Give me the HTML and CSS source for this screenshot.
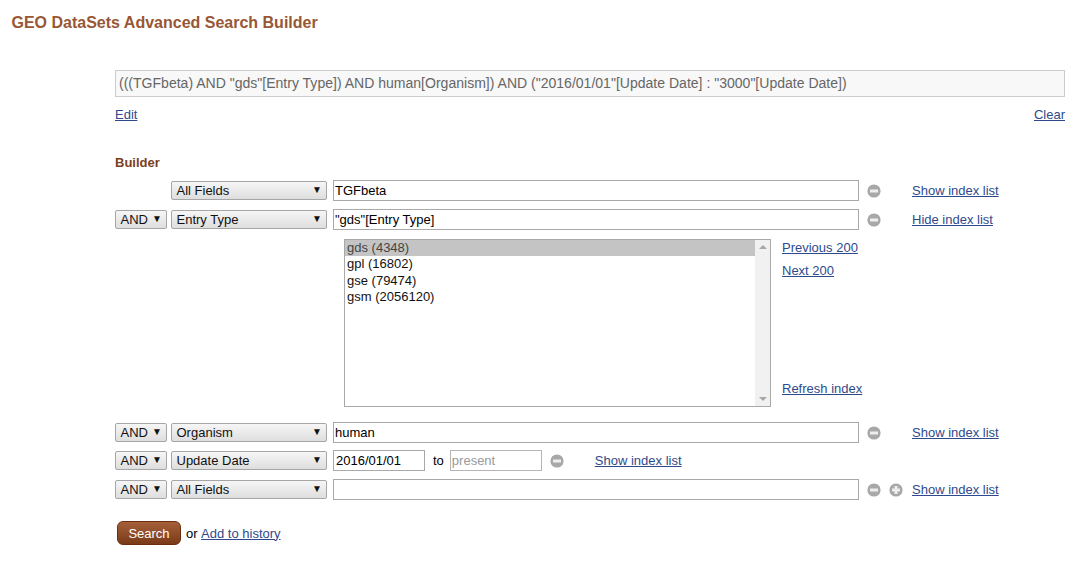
FILE: index.html
```html
<!DOCTYPE html>
<html lang="en">
<head>
<meta charset="utf-8">
<title>GEO DataSets Advanced Search Builder</title>
<link rel="stylesheet" href="styles.css">
</head>
<body>
<svg class="defs" width="0" height="0" aria-hidden="true">
  <symbol id="minus" viewBox="0 0 14 14"><circle cx="7" cy="7" r="6.6" fill="#a8a8a8"/><rect x="3" y="5.5" width="8" height="3" fill="#eee"/></symbol>
  <symbol id="plus" viewBox="0 0 14 14"><circle cx="7" cy="7" r="6.6" fill="#a8a8a8"/><rect x="3" y="5.5" width="8" height="3" fill="#eee"/><rect x="5.5" y="3" width="3" height="8" fill="#eee"/></symbol>
</svg>
<h1 class="title">GEO DataSets Advanced Search Builder</h1>
<main class="content">
  <div class="query">(((TGFbeta) AND "gds"[Entry Type]) AND human[Organism]) AND ("2016/01/01"[Update Date] : "3000"[Update Date])</div>
  <div class="query-links"><a href="#">Edit</a><a href="#">Clear</a></div>
  <h2 class="builder-title">Builder</h2>

  <div class="row">
    <span class="op-empty"></span>
    <div class="select field"><span>All Fields</span><i class="arrow">▼</i></div>
    <div class="input term">TGFbeta</div>
    <svg class="icon"><use href="#minus"/></svg>
    <a class="index-link" href="#">Show index list</a>
  </div>
  <div class="row">
    <div class="select op"><span>AND</span><i class="arrow">▼</i></div>
    <div class="select field"><span>Entry Type</span><i class="arrow">▼</i></div>
    <div class="input term">"gds"[Entry Type]</div>
    <svg class="icon"><use href="#minus"/></svg>
    <a class="index-link" href="#">Hide index list</a>
  </div>
  <div class="index-panel">
    <div class="listbox">
      <div class="options">
        <div class="option selected">gds (4348)</div>
        <div class="option">gpl (16802)</div>
        <div class="option">gse (79474)</div>
        <div class="option">gsm (2056120)</div>
      </div>
      <div class="scrollbar"><span class="sb-up"></span><span class="sb-down"></span></div>
    </div>
    <div class="panel-links">
      <a href="#">Previous 200</a>
      <a href="#">Next 200</a>
      <a class="refresh" href="#">Refresh index</a>
    </div>
  </div>
  <div class="row">
    <div class="select op"><span>AND</span><i class="arrow">▼</i></div>
    <div class="select field"><span>Organism</span><i class="arrow">▼</i></div>
    <div class="input term">human</div>
    <svg class="icon"><use href="#minus"/></svg>
    <a class="index-link" href="#">Show index list</a>
  </div>
  <div class="row row-date">
    <div class="select op"><span>AND</span><i class="arrow">▼</i></div>
    <div class="select field"><span>Update Date</span><i class="arrow">▼</i></div>
    <div class="input date">2016/01/01</div>
    <span class="to">to</span>
    <div class="input date placeholder">present</div>
    <svg class="icon icon-date"><use href="#minus"/></svg>
    <a class="index-link link-date" href="#">Show index list</a>
  </div>
  <div class="row">
    <div class="select op"><span>AND</span><i class="arrow">▼</i></div>
    <div class="select field"><span>All Fields</span><i class="arrow">▼</i></div>
    <div class="input term"></div>
    <svg class="icon"><use href="#minus"/></svg>
    <svg class="icon icon-plus"><use href="#plus"/></svg>
    <a class="index-link link-plus" href="#">Show index list</a>
  </div>
  <div class="actions">
    <button class="search" type="button">Search</button>
    <span class="or">or</span>
    <a href="#">Add to history</a>
  </div>
</main>
</body>
</html>
```
FILE: styles.css
```css
* { box-sizing: border-box; }
html, body { margin: 0; padding: 0; }
body {
  width: 1090px;
  height: 576px;
  overflow: hidden;
  background: #fff;
  color: #000;
  font-family: "Liberation Sans", Arial, sans-serif;
  font-size: 13px;
}
a { color: #2f4a8c; text-decoration: underline; }
.defs { display: block; height: 0; }
.title {
  margin: 0;
  padding: 13px 0 0 11.5px;
  height: 70px;
  font-size: 16px;
  line-height: 19px;
  font-weight: bold;
  color: #985735;
}
.content { margin-left: 115px; width: 950px; }
.query {
  height: 27px;
  border: 1px solid #ccc;
  background: #f8f8f8;
  padding: 0 3px;
  font-size: 14.04px;
  line-height: 25px;
  color: #666;
  white-space: nowrap;
}
.query-links {
  display: flex;
  justify-content: space-between;
  margin-top: 10px;
  line-height: 15px;
}
.builder-title {
  margin: 0;
  padding-top: 33px;
  font-size: 13px;
  line-height: 15px;
  font-weight: bold;
  color: #7a3f20;
}
.row {
  display: flex;
  align-items: center;
  height: 21px;
  margin-top: 8px;
}
.builder-title + .row { margin-top: 10px; }
.row-date { margin-top: 7px; }
.row-date + .row { margin-top: 8px; }
.op-empty { width: 52px; flex: none; }
.select {
  display: flex;
  align-items: center;
  justify-content: space-between;
  flex: none;
  height: 19px;
  border: 1px solid #a6a6a6;
  border-radius: 2px;
  background: linear-gradient(#f6f6f6, #dedede);
  padding: 0 4px 0 4.5px;
  font-size: 13px;
  color: #111;
}
.op { width: 52px; }
.field { width: 156px; margin-left: 4px; }
.arrow { font-style: normal; font-size: 10px; color: #111; line-height: 1; margin: 0 0 1px 0; }
.input {
  flex: none;
  height: 21px;
  border: 1px solid #a9a9a9;
  padding: 0 1px;
  font-size: 13px;
  line-height: 19px;
  background: #fff;
  white-space: nowrap;
}
.term { width: 526px; margin-left: 6px; }
.date { width: 92px; margin-left: 6px; padding-left: 2px; }
.to { margin: 0 6px 0 8px; font-size: 13px; }
.to + .date { margin-left: 0; }
.placeholder { color: #999; border-color: #b5b5b5; padding-left: 1px; }
.icon { width: 14px; height: 14px; flex: none; margin-left: 7.5px; }
.icon-date { margin-left: 8px; }
.icon-plus { margin-left: 8.5px; }
.index-link { margin-left: 31.5px; white-space: nowrap; }
.link-date { margin-left: 31px; }
.link-plus { margin-left: 9px; }
.index-panel {
  display: flex;
  margin: 9px 0 15px 229px;
  height: 168px;
}
.listbox {
  display: flex;
  width: 427px;
  height: 168px;
  border: 1px solid #a9a9a9;
  font-size: 13px;
  line-height: 16.4px;
  color: #111;
}
.options { flex: 1; }
.option { padding-left: 2px; height: 16.4px; white-space: nowrap; }
.selected { background: #c4c4c4; color: #444; }
.scrollbar {
  position: relative;
  width: 15px;
  background: #f1f1f1;
  display: flex;
  flex-direction: column;
  justify-content: space-between;
  align-items: center;
  padding: 5px 0;
}
.sb-up, .sb-down { width: 0; height: 0; border-left: 4px solid transparent; border-right: 4px solid transparent; }
.sb-up { border-bottom: 4px solid #a8a8a8; }
.sb-down { border-top: 4px solid #a8a8a8; }
.panel-links {
  display: flex;
  flex-direction: column;
  margin-left: 11px;
  padding-top: 1px;
  line-height: 15px;
}
.panel-links a { margin-bottom: 8px; }
.panel-links .refresh { margin-top: auto; margin-bottom: 11px; }
.actions {
  display: flex;
  align-items: center;
  margin: 21px 0 0 2px;
  height: 24px;
}
.search {
  width: 64px;
  height: 24px;
  padding: 0;
  border: 1px solid #6b2f10;
  border-radius: 6px;
  background: linear-gradient(#a5603a, #7a3a18);
  color: #fff;
  font-family: inherit;
  font-size: 13px;
}
.or { margin: 0 3.5px 0 5px; }
```
